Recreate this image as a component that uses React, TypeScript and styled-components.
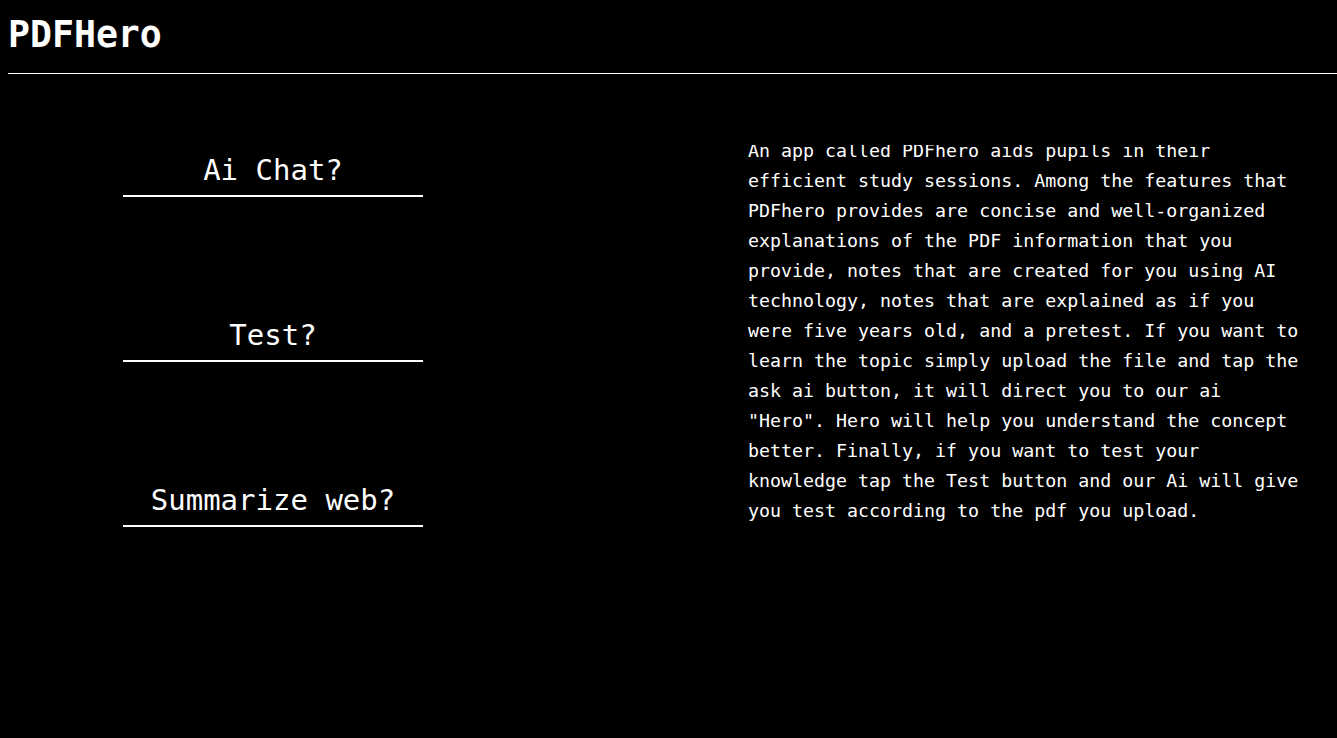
import React from "react";
import styled, { createGlobalStyle } from "styled-components";

const Global = createGlobalStyle`
  html, body { background: #000; }
  body {
    margin: 8px 0 8px 8px;
    color: #fff;
    font-family: "DejaVu Sans Mono", "Liberation Mono", monospace;
    overflow: hidden;
  }
`;

const Header = styled.header`
  padding: 6px 0 17px;
  border-bottom: 1px solid #fff;
`;

const Title = styled.h1`
  margin: 0;
  font-size: 36.5px;
  line-height: 42px;
  font-weight: bold;
`;

const Main = styled.main`
  display: flex;
  align-items: flex-start;
  padding-top: 70px;
`;

const Menu = styled.nav`
  display: flex;
  flex-direction: column;
  gap: 121px;
  width: 300px;
  margin-left: 115px;
  padding-top: 9px;
`;

const MenuButton = styled.div`
  font-size: 29px;
  line-height: 34px;
  text-align: center;
  padding-bottom: 8px;
  border-bottom: 2px solid #fff;
  cursor: pointer;
`;

const InfoBox = styled.section`
  margin-left: 325px;
  margin-top: 1px;
  width: 560px;
  height: 381px;
  overflow: hidden;
`;

const Info = styled.p`
  margin: -9px 0 0;
  font-size: 18.3px;
  line-height: 30px;
`;

export default function App() {
  return (
    <>
      <Global />
      <Header>
        <Title>PDFHero</Title>
      </Header>
      <Main>
        <Menu>
          <MenuButton>Ai Chat?</MenuButton>
          <MenuButton>Test?</MenuButton>
          <MenuButton>Summarize web?</MenuButton>
        </Menu>
        <InfoBox>
          <Info>
            An app called PDFhero aids pupils in their efficient study sessions. Among the
            features that PDFhero provides are concise and well-organized explanations of the
            PDF information that you provide, notes that are created for you using AI technology,
            notes that are explained as if you were five years old, and a pretest. If you want to
            learn the topic simply upload the file and tap the ask ai button, it will direct you
            to our ai "Hero". Hero will help you understand the concept better. Finally, if you
            want to test your knowledge tap the Test button and our Ai will give you test
            according to the pdf you upload.
          </Info>
        </InfoBox>
      </Main>
    </>
  );
}
